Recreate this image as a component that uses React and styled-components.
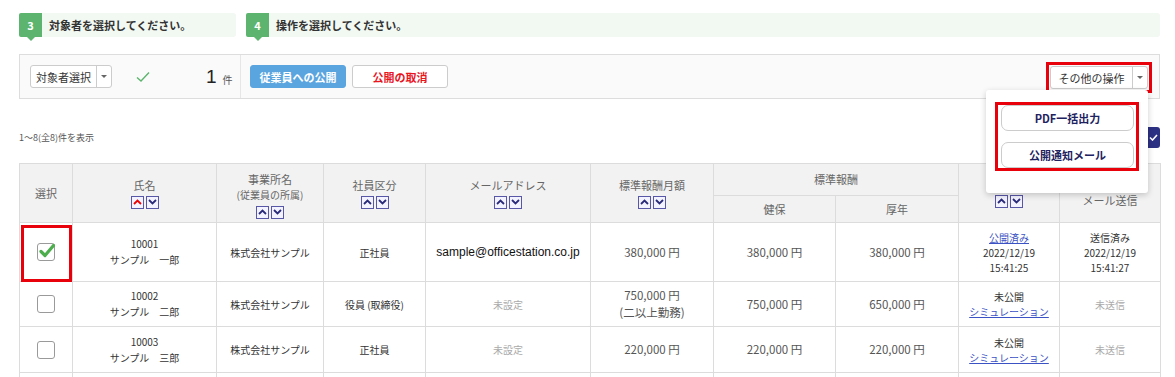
import React from "react";
import styled, { createGlobalStyle, css } from "styled-components";

const Global = createGlobalStyle`
  html, body { margin: 0; padding: 0; background: #fff; }
  body {
    font-family: "Noto Sans CJK JP", "Noto Sans", sans-serif;
    font-size: 11px;
    color: #333;
  }
  * { box-sizing: border-box; }
`;

const Page = styled.div`
  padding: 13px 15px 0 19px;
  width: 1175px;
`;

const StepRow = styled.div`
  display: flex;
  gap: 10px;
  height: 24px;
`;

const Step = styled.div`
  display: flex;
  align-items: center;
  background: #f2f8f2;
  border-radius: 3px;
  ${(p) => (p.$wide ? "flex: 1;" : `width: ${p.$w}px;`)}
`;

const Badge = styled.div`
  position: relative;
  width: 23px;
  height: 24px;
  background: #5cb46e;
  color: #fff;
  font-weight: bold;
  font-size: 11px;
  display: flex;
  align-items: center;
  justify-content: center;
  border-radius: 2px 0 0 2px;
  &::after {
    content: "";
    position: absolute;
    left: 8px;
    bottom: -4px;
    border-left: 4px solid transparent;
    border-right: 4px solid transparent;
    border-top: 4px solid #5cb46e;
  }
`;

const StepText = styled.span`
  margin-left: 7px;
  font-weight: bold;
  font-size: 11px;
  color: #333;
`;

const Toolbar = styled.div`
  margin-top: 17px;
  height: 45px;
  border: 1px solid #ddd;
  background: #fafafa;
  display: flex;
  align-items: center;
`;

const LeftSection = styled.div`
  width: 221px;
  height: 100%;
  border-right: 1px solid #e6e6e6;
  display: flex;
  align-items: center;
  padding-left: 10px;
`;

const SelectBox = styled.div`
  display: flex;
  flex: none;
  height: 23px;
  border: 1px solid #ccc;
  border-radius: 3px;
  background: #fff;
  align-items: stretch;
  font-size: 11px;
  color: #333;
  white-space: nowrap;
  ${(p) => p.$w && `width: ${p.$w}px;`}
`;

const SelectLabel = styled.div`
  flex: 1;
  display: flex;
  align-items: center;
  justify-content: center;
  padding: 0 2px;
`;

const SelectArrow = styled.div`
  width: 15px;
  flex: none;
  border-left: 1px solid #ccc;
  display: flex;
  align-items: center;
  justify-content: center;
  &::before {
    content: "";
    border-left: 3px solid transparent;
    border-right: 3px solid transparent;
    border-top: 3px solid #666;
  }
`;

const CheckMark = styled.svg`
  margin-left: 24px;
  width: 14px;
  height: 12px;
`;

const Count = styled.span`
  margin-left: 56px;
  font-size: 19px;
  font-family: "Liberation Sans", sans-serif;
  color: #222;
`;

const CountUnit = styled.span`
  margin-left: 6px;
  margin-top: 6px;
  font-size: 10px;
  color: #555;
`;

const ActionGroup = styled.div`
  display: flex;
  gap: 6px;
  padding-left: 9px;
  flex: 1;
`;

const ActionButton = styled.button`
  height: 23px;
  width: ${(p) => p.$w}px;
  border-radius: 3px;
  font-family: inherit;
  font-size: 11px;
  font-weight: bold;
  padding: 0;
  cursor: pointer;
  ${(p) =>
    p.$primary
      ? css`
          background: #5aa5e0;
          border: 1px solid #5aa5e0;
          color: #fff;
        `
      : css`
          background: #fff;
          border: 1px solid #ccc;
          color: #e8141e;
        `}
`;

const MenuWrap = styled.div`
  position: relative;
  margin-right: 11px;
  margin-top: 2px;
`;

const Highlight = styled.div`
  outline: 3px solid #e8000b;
  outline-offset: 1px;
`;

const Dropdown = styled.div`
  position: absolute;
  right: 0;
  top: 24px;
  width: 162px;
  height: 103px;
  background: #fff;
  box-shadow: 0 2px 6px rgba(0, 0, 0, 0.2);
  border-radius: 3px;
  padding: 12px 9px 0 9px;
  z-index: 10;
`;

const DropdownInner = styled.div`
  border: 3px solid #e8000b;
  padding: 0 2px 0 3px;
  height: 69px;
  display: flex;
  flex-direction: column;
  gap: 11px;
  justify-content: center;
`;

const MenuButton = styled.button`
  height: 26px;
  width: 133px;
  background: #fff;
  border: 1px solid #ccc;
  border-radius: 7px;
  font-family: inherit;
  font-size: 11px;
  font-weight: bold;
  color: #1e2260;
  padding: 0;
`;

const InfoRow = styled.div`
  margin-top: 31px;
  height: 14px;
  display: flex;
  align-items: center;
  justify-content: space-between;
  position: relative;
`;

const InfoText = styled.span`
  font-size: 9px;
  color: #555;
`;

const NavyButton = styled.div`
  width: 24px;
  height: 21px;
  margin-top: 1px;
  border-radius: 3px;
  background: #2c3183;
  display: flex;
  align-items: center;
  justify-content: flex-end;
  padding-right: 2px;
`;

const Table = styled.table`
  margin-top: 19px;
  border-collapse: collapse;
  table-layout: fixed;
  width: 1141px;
`;

const HeadRow = styled.tr`
  height: ${(p) => p.$h}px;
`;

const Th = styled.th`
  background: #f2f2f2;
  border: 1px solid #dcdcdc;
  color: #666;
  font-weight: normal;
  font-size: 11px;
  line-height: 15px;
  text-align: center;
  vertical-align: middle;
  padding: ${(p) => p.$pad || "0"};
`;

const SubLabel = styled.div`
  font-size: 10px;
  color: #666;
`;

const SortGroup = styled.div`
  display: flex;
  justify-content: center;
  gap: 2px;
  margin-top: ${(p) => p.$mt || 4}px;
`;

const SortBtn = styled.span`
  width: 13px;
  height: 13px;
  border: 1px solid #5856a6;
  background: #f3f3ff;
  display: flex;
  align-items: center;
  justify-content: center;
`;

const BodyRow = styled.tr`
  height: ${(p) => p.$h}px;
`;

const Td = styled.td`
  border: 1px solid #dcdcdc;
  text-align: center;
  vertical-align: middle;
  font-size: 10px;
  line-height: ${(p) => p.$lh || 15}px;
  color: ${(p) => (p.$muted ? "#aaa" : "#333")};
  padding: 0;
  position: relative;
`;

const Email = styled.span`
  font-family: "Liberation Sans", sans-serif;
  font-size: 12px;
  color: #111;
`;

const Money = styled.span`
  color: #555;
  font-size: 11.5px;
`;

const Link = styled.a`
  color: #3b52c4;
  text-decoration: underline;
  cursor: pointer;
`;

const CheckboxBox = styled.div`
  width: 18px;
  height: 18px;
  margin: 0 auto;
  border: 1px solid #9a9a9a;
  border-radius: 3px;
  background: #fff;
  position: relative;
`;

const CheckSvg = styled.svg`
  position: absolute;
  left: 1px;
  top: -1px;
`;

const RedBox = styled.div`
  position: absolute;
  left: 1px;
  top: 2px;
  right: 0;
  bottom: -1px;
  border: 3px solid #e8000b;
  pointer-events: none;
`;

function Chevron({ up, red }) {
  return (
    <svg width="9" height="6" viewBox="0 0 9 6">
      <path
        d={up ? "M1 5 L4.5 1.5 L8 5" : "M1 1 L4.5 4.5 L8 1"}
        fill="none"
        stroke={red ? "#e00" : "#2a2a7a"}
        strokeWidth="1.8"
      />
    </svg>
  );
}

function Sort({ redUp, mt }) {
  return (
    <SortGroup $mt={mt}>
      <SortBtn>
        <Chevron up red={redUp} />
      </SortBtn>
      <SortBtn>
        <Chevron />
      </SortBtn>
    </SortGroup>
  );
}

function Checkbox({ checked }) {
  return (
    <CheckboxBox>
      {checked && (
        <CheckSvg width="16" height="16" viewBox="0 0 16 16">
          <path
            d="M2 8.5 L6 12.5 L14.5 2.5"
            fill="none"
            stroke="#4cae4c"
            strokeWidth="3.2"
            strokeLinecap="round"
            strokeLinejoin="round"
          />
        </CheckSvg>
      )}
    </CheckboxBox>
  );
}

const rows = [
  {
    id: "10001",
    name: "サンプル　一郎",
    office: "株式会社サンプル",
    type: "正社員",
    email: "sample@officestation.co.jp",
    monthly: ["380,000 円"],
    ken: "380,000 円",
    kou: "380,000 円",
    pub: "done",
    pubDate: ["2022/12/19", "15:41:25"],
    mail: ["送信済み", "2022/12/19", "15:41:27"],
    checked: true,
    h: 59,
  },
  {
    id: "10002",
    name: "サンプル　二郎",
    office: "株式会社サンプル",
    type: "役員 (取締役)",
    email: null,
    monthly: ["750,000 円", "(二以上勤務)"],
    ken: "750,000 円",
    kou: "650,000 円",
    pub: "none",
    mail: null,
    h: 45,
  },
  {
    id: "10003",
    name: "サンプル　三郎",
    office: "株式会社サンプル",
    type: "正社員",
    email: null,
    monthly: ["220,000 円"],
    ken: "220,000 円",
    kou: "220,000 円",
    pub: "none",
    mail: null,
    h: 46,
  },
  {
    id: "10004",
    name: "サンプル　四郎",
    office: "株式会社サンプル",
    type: "正社員",
    email: null,
    monthly: ["220,000 円"],
    ken: "220,000 円",
    kou: "220,000 円",
    pub: "none",
    mail: null,
    h: 46,
  },
];

const widths = [53, 144, 107, 102, 165, 123, 122, 123, 101, 101];

export default function App() {
  return (
    <>
      <Global />
      <Page>
        <StepRow>
          <Step $w={217}>
            <Badge>3</Badge>
            <StepText>対象者を選択してください。</StepText>
          </Step>
          <Step $wide>
            <Badge>4</Badge>
            <StepText>操作を選択してください。</StepText>
          </Step>
        </StepRow>

        <Toolbar>
          <LeftSection>
            <SelectBox $w={82}>
              <SelectLabel>対象者選択</SelectLabel>
              <SelectArrow />
            </SelectBox>
            <CheckMark viewBox="0 0 14 12">
              <path d="M1 6.5 L5 10 L13 1.5" fill="none" stroke="#5cb46e" strokeWidth="1.4" />
            </CheckMark>
            <Count>1</Count>
            <CountUnit>件</CountUnit>
          </LeftSection>
          <ActionGroup>
            <ActionButton $primary $w={96}>従業員への公開</ActionButton>
            <ActionButton $w={96}>公開の取消</ActionButton>
          </ActionGroup>
          <MenuWrap>
            <Highlight>
              <SelectBox $w={98}>
                <SelectLabel>その他の操作</SelectLabel>
                <SelectArrow />
              </SelectBox>
            </Highlight>
            <Dropdown>
              <DropdownInner>
                <MenuButton>PDF一括出力</MenuButton>
                <MenuButton>公開通知メール</MenuButton>
              </DropdownInner>
            </Dropdown>
          </MenuWrap>
        </Toolbar>

        <InfoRow>
          <InfoText>1〜8(全8)件を表示</InfoText>
          <NavyButton>
            <svg width="9" height="7" viewBox="0 0 9 7">
              <path d="M1 3.5 L3.5 6 L8 1" fill="none" stroke="#fff" strokeWidth="1.6" />
            </svg>
          </NavyButton>
        </InfoRow>

        <Table>
          <colgroup>
            {widths.map((w, i) => (
              <col key={i} style={{ width: w }} />
            ))}
          </colgroup>
          <thead>
            <HeadRow $h={32}>
              <Th rowSpan={2}>選択</Th>
              <Th rowSpan={2}>
                氏名
                <Sort redUp mt={3} />
              </Th>
              <Th rowSpan={2} $pad="4px 0 0">
                事業所名
                <SubLabel>(従業員の所属)</SubLabel>
                <Sort mt={4} />
              </Th>
              <Th rowSpan={2}>
                社員区分
                <Sort mt={3} />
              </Th>
              <Th rowSpan={2}>
                メールアドレス
                <Sort mt={3} />
              </Th>
              <Th rowSpan={2}>
                標準報酬月額
                <Sort mt={3} />
              </Th>
              <Th colSpan={2}>標準報酬</Th>
              <Th rowSpan={2} $pad="0 0 2px">
                公開状況
                <Sort mt={3} />
              </Th>
              <Th rowSpan={2} $pad="14px 0 0">
                メール送信
              </Th>
            </HeadRow>
            <HeadRow $h={27}>
              <Th>健保</Th>
              <Th>厚年</Th>
            </HeadRow>
          </thead>
          <tbody>
            {rows.map((r) => (
              <BodyRow key={r.id} $h={r.h}>
                <Td>
                  <Checkbox checked={r.checked} />
                  {r.checked && <RedBox />}
                </Td>
                <Td $lh={16}>
                  {r.id}
                  <br />
                  {r.name}
                </Td>
                <Td>{r.office}</Td>
                <Td>{r.type}</Td>
                <Td $muted={!r.email}>{r.email ? <Email>{r.email}</Email> : "未設定"}</Td>
                <Td $lh={16}>
                  {r.monthly.map((m, i) => (
                    <div key={i}>
                      <Money>{m}</Money>
                    </div>
                  ))}
                </Td>
                <Td>
                  <Money>{r.ken}</Money>
                </Td>
                <Td>
                  <Money>{r.kou}</Money>
                </Td>
                <Td>
                  {r.pub === "done" ? (
                    <>
                      <Link>公開済み</Link>
                      <br />
                      {r.pubDate[0]}
                      <br />
                      {r.pubDate[1]}
                    </>
                  ) : (
                    <>
                      未公開
                      <br />
                      <Link>シミュレーション</Link>
                    </>
                  )}
                </Td>
                <Td $muted={!r.mail}>
                  {r.mail ? (
                    <>
                      {r.mail[0]}
                      <br />
                      {r.mail[1]}
                      <br />
                      {r.mail[2]}
                    </>
                  ) : (
                    "未送信"
                  )}
                </Td>
              </BodyRow>
            ))}
          </tbody>
        </Table>
      </Page>
    </>
  );
}
